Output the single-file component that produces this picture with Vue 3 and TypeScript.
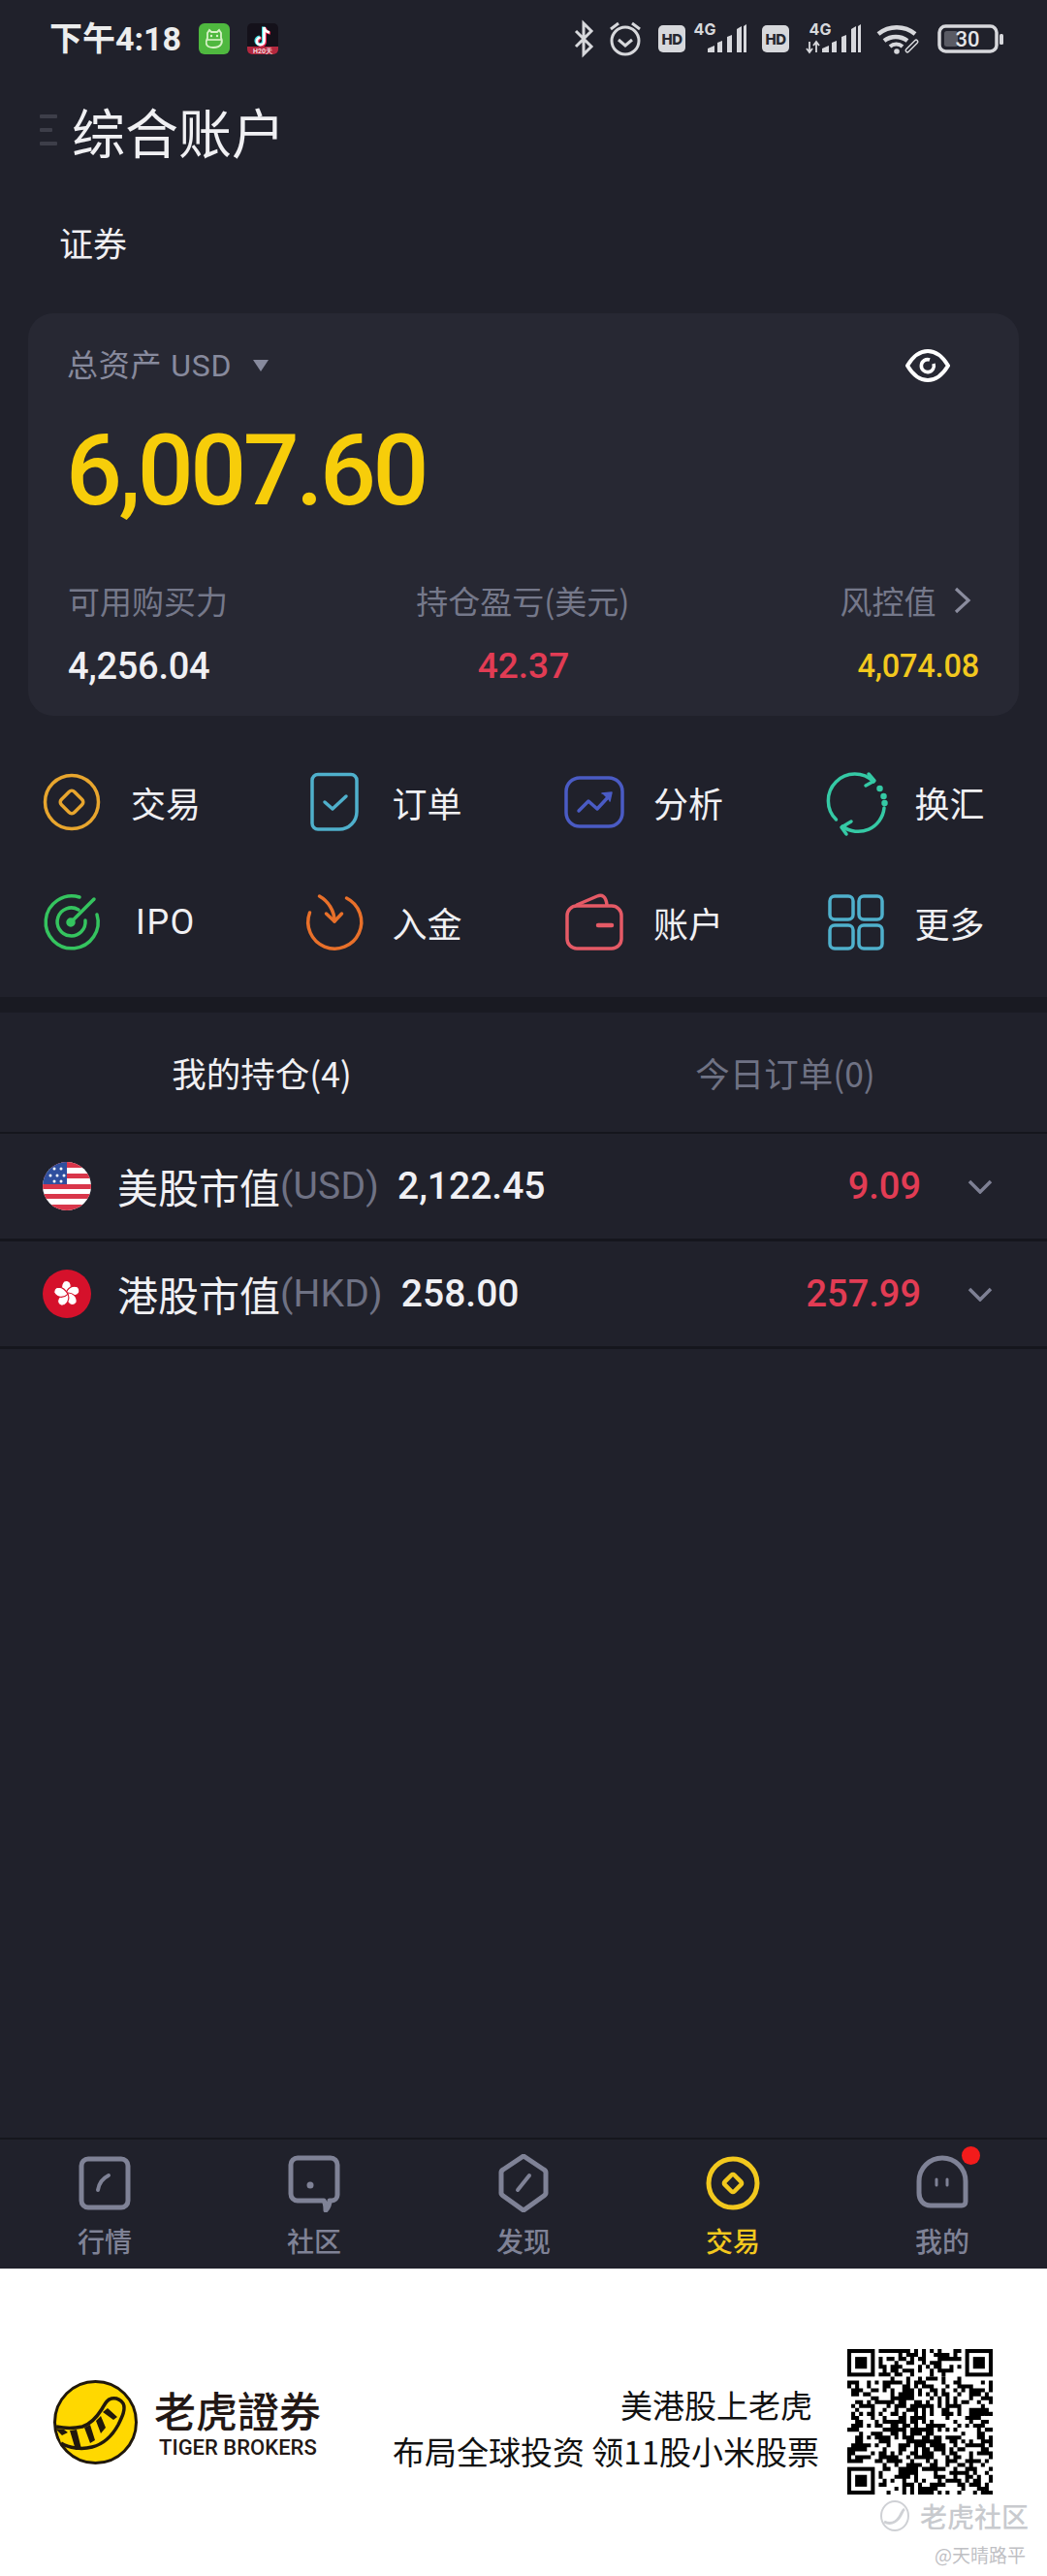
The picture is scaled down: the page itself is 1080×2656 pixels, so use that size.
<script setup lang="ts">
const QR_SIZE = 37
const cell = 150 / QR_SIZE

function inFinder(x: number, y: number): boolean {
  return (x < 8 && y < 8) || (x >= QR_SIZE - 8 && y < 8) || (x < 8 && y >= QR_SIZE - 8)
}

function buildQr(): string {
  let seed = 20210418
  const next = () => {
    seed = (seed * 1664525 + 1013904223) % 4294967296
    return seed / 4294967296
  }
  const parts: string[] = []
  for (let y = 0; y < QR_SIZE; y++) {
    for (let x = 0; x < QR_SIZE; x++) {
      const r = next()
      if (!inFinder(x, y) && r > 0.48) {
        parts.push(`M${(x * cell).toFixed(2)} ${(y * cell).toFixed(2)}h${cell.toFixed(2)}v${cell.toFixed(2)}h-${cell.toFixed(2)}z`)
      }
    }
  }
  return parts.join('')
}

const qrPath = buildQr()
const finders = [
  [0, 0],
  [150 - 7 * cell, 0],
  [0, 150 - 7 * cell],
]
const fs = 7 * cell

const summary = [
  { label: '可用购买力', value: '4,256.04', cls: 'v-white' },
  { label: '持仓盈亏(美元)', value: '42.37', cls: 'v-red' },
  { label: '风控值', value: '4,074.08', cls: 'v-yellow' },
]

const actions = [
  { id: 'trade', label: '交易' },
  { id: 'order', label: '订单' },
  { id: 'analysis', label: '分析' },
  { id: 'fx', label: '换汇' },
  { id: 'ipo', label: 'IPO' },
  { id: 'deposit', label: '入金' },
  { id: 'wallet', label: '账户' },
  { id: 'more', label: '更多' },
]

const tabs = [
  { id: 'quote', label: '行情' },
  { id: 'community', label: '社区' },
  { id: 'discover', label: '发现' },
  { id: 'trade', label: '交易' },
  { id: 'me', label: '我的' },
]

const holdings = [
  { id: 'us', name: '美股市值', cur: '(USD)', amount: '2,122.45', pnl: '9.09' },
  { id: 'hk', name: '港股市值', cur: '(HKD)', amount: '258.00', pnl: '257.99' },
]

const petalAngles = [0, 72, 144, 216, 288]
</script>

<template>
  <div class="page">
    <div class="dark">
      <!-- status bar -->
      <div class="status">
        <span class="time">下午4:18</span>
        <svg class="app-ic" width="32" height="32" viewBox="0 0 32 32">
          <rect width="32" height="32" rx="6" fill="#4fb83f" />
          <path d="M9 10l2-3 2 2h6l2-2 2 3v5c2 4 1 10-8 10S7 19 9 15z" fill="none" stroke="#d8f2c8" stroke-width="1.8" />
          <path d="M8 17h16" stroke="#d8f2c8" stroke-width="1.6" />
          <circle cx="13" cy="13" r="1.2" fill="#d8f2c8" />
          <circle cx="19" cy="13" r="1.2" fill="#d8f2c8" />
        </svg>
        <svg class="app-ic" width="32" height="32" viewBox="0 0 32 32">
          <rect width="32" height="32" rx="5" fill="#14111a" />
          <path d="M17.5 4v14.5a3.8 3.8 0 1 1-3.8-3.8" fill="none" stroke="#e8264f" stroke-width="3" transform="translate(1 .8)" />
          <path d="M17.5 4c.4 3 2.4 5 5.5 5.4" fill="none" stroke="#e8264f" stroke-width="3" transform="translate(1 .8)" />
          <path d="M17.5 4v14.5a3.8 3.8 0 1 1-3.8-3.8" fill="none" stroke="#3fe0e6" stroke-width="3" transform="translate(-1 -.6)" />
          <path d="M17.5 4v14.5a3.8 3.8 0 1 1-3.8-3.8" fill="none" stroke="#fff" stroke-width="2.6" />
          <path d="M17.5 4c.4 3 2.4 5 5.5 5.4" fill="none" stroke="#fff" stroke-width="2.6" />
          <path d="M0 24h32v3a5 5 0 0 1-5 5H5a5 5 0 0 1-5-5z" fill="#b3283f" />
          <text class="tk" x="16" y="31" text-anchor="middle">H20天</text>
        </svg>
        <span class="grow"></span>
        <svg class="sys" width="450" height="40" viewBox="590 20 450 40" fill="#d7d8dc">
          <!-- bluetooth -->
          <path d="M594 32l16 16-8 8V24l8 8-16 16" fill="none" stroke="#d7d8dc" stroke-width="3" />
          <!-- alarm -->
          <circle cx="645" cy="42" r="14" fill="none" stroke="#d7d8dc" stroke-width="3" />
          <path d="M638 41l7 6 7-6" fill="none" stroke="#d7d8dc" stroke-width="3" />
          <path d="M630 30l8-6M660 30l-8-6" stroke="#d7d8dc" stroke-width="3" />
          <!-- HD -->
          <rect x="679" y="26" width="28" height="28" rx="5" />
          <text class="hd" x="693" y="46" text-anchor="middle">HD</text>
          <text class="g4" x="727" y="36" text-anchor="middle">4G</text>
          <path d="M730 54v-4l7-3v7zM740 54V44l5-2v12zM750 54V38l5-2v18zM760 54V30l5-3v27zM767 54V27l3-2v29z" />
          <!-- HD 2 -->
          <rect x="786" y="26" width="28" height="28" rx="5" />
          <text class="hd" x="800" y="46" text-anchor="middle">HD</text>
          <text class="g4" x="846" y="36" text-anchor="middle">4G</text>
          <path d="M835 43v11M832 50l3 4 3-4M842 43v11M839 47l3-4 3 4" fill="none" stroke="#d7d8dc" stroke-width="1.8" />
          <path d="M848 54v-4l7-3v7zM858 54V44l5-2v12zM868 54V38l5-2v18zM878 54V30l5-3v27zM885 54V27l3-2v29z" />
          <!-- wifi -->
          <path d="M906 35a30 30 0 0 1 38 0" fill="none" stroke="#d7d8dc" stroke-width="4.5" />
          <path d="M912 42a20 20 0 0 1 24 0" fill="none" stroke="#d7d8dc" stroke-width="4.5" />
          <path d="M918 48a10 10 0 0 1 13 0" fill="none" stroke="#d7d8dc" stroke-width="4" />
          <circle cx="925" cy="53" r="2.8" />
          <path d="M936 52l9-9" stroke="#d7d8dc" stroke-width="5" stroke-linecap="round" />
          <path d="M936 52l9-9" stroke="#20212b" stroke-width="2" stroke-linecap="round" />
          <!-- battery -->
          <rect x="969" y="27" width="59" height="26" rx="6.5" fill="none" stroke="#d7d8dc" stroke-width="3.5" />
          <rect x="974" y="32" width="14" height="16" rx="2.5" fill="#5a5b64" />
          <rect x="1031" y="35" width="4" height="11" rx="1.5" />
          <text class="batt" x="998" y="48" text-anchor="middle">30</text>
        </svg>
      </div>

      <!-- title -->
      <div class="title-row">
        <div class="handle"><i></i><i class="short"></i><i></i></div>
        <h1 class="title">综合账户</h1>
      </div>
      <div class="section">证券</div>

      <!-- assets card -->
      <div class="card">
        <div class="card-top">
          <span class="total">总资产 USD</span>
          <span class="tri"></span>
          <span class="grow"></span>
          <svg class="eye" width="46" height="36" viewBox="0 0 46 36" fill="none" stroke="#fff">
            <path d="M2 18C8 8 15 3 23 3s15 5 21 15c-6 10-13 15-21 15S8 28 2 18z" stroke-width="4" />
            <path d="M29 16a6.5 6.5 0 1 1-4-4" stroke-width="3.6" />
          </svg>
        </div>
        <div class="big">6,007.60</div>
        <div class="sum-row">
          <div v-for="(s, i) in summary" :key="s.label" class="sum" :class="'sum-' + i">
            <div class="sum-label">
              {{ s.label }}
              <svg v-if="i === 2" class="chev" width="18" height="28" viewBox="0 0 18 28" fill="none" stroke="#8a8c9e" stroke-width="3.2"><path d="M2 2l13 12L2 26" /></svg>
            </div>
            <div class="sum-value" :class="s.cls">{{ s.value }}</div>
          </div>
        </div>
      </div>

      <!-- action grid -->
      <div class="actions">
        <div v-for="a in actions" :key="a.id" class="action">
          <svg class="a-ic" width="64" height="64" viewBox="0 0 64 64" fill="none" stroke-width="3.5" stroke-linecap="round" stroke-linejoin="round">
            <g v-if="a.id === 'trade'" stroke="#e8a62e">
              <circle cx="32" cy="32" r="27.5" />
              <rect x="22.5" y="22.5" width="19" height="19" rx="4" transform="rotate(45 32 32)" />
            </g>
            <g v-else-if="a.id === 'order'" stroke="#4fb0cc">
              <path d="M16 3.5h34a6 6 0 0 1 6 6V42a18 18 0 0 1-18 18H16a6 6 0 0 1-6-6V9.5a6 6 0 0 1 6-6z" />
              <path d="M23 32l8 7 14-13" />
            </g>
            <g v-else-if="a.id === 'analysis'" stroke="#4a5bc4">
              <rect x="3" y="7" width="58" height="50" rx="14" />
              <path d="M16 41l10-10 9 8 13-14" />
              <path d="M40 23l10-1-2 9" fill="#4a5bc4" stroke-width="1.5" />
            </g>
            <g v-else-if="a.id === 'fx'" stroke="#35c9a5">
              <path d="M11.5 50A27 27 0 0 1 50 11" />
              <path d="M45 3l6 7-9 5" />
              <path d="M61 38A27 27 0 0 1 18 57" />
              <path d="M27 52l-10 6 5 7" />
              <circle cx="56.5" cy="18" r="1.5" fill="#35c9a5" />
              <circle cx="60.5" cy="26" r="1.5" fill="#35c9a5" />
              <circle cx="61.5" cy="33" r="1.5" fill="#35c9a5" />
            </g>
            <g v-else-if="a.id === 'ipo'" stroke="#35c45f">
              <path d="M40 6A27 27 0 1 0 58 24" />
              <path d="M39 19A14.5 14.5 0 1 0 46 30" />
              <path d="M31 32L55 8" />
              <circle cx="31" cy="32" r="3" fill="#35c45f" />
            </g>
            <g v-else-if="a.id === 'deposit'" stroke="#e8702a">
              <path d="M45.5 7A27.5 27.5 0 1 1 7.5 22" />
              <path d="M17.5 5c9 5 15.5 15 15.5 26" />
              <path d="M24.5 23l8.5 8 7.5-8" />
            </g>
            <g v-else-if="a.id === 'wallet'" stroke="#e55a66">
              <rect x="4" y="15" width="56" height="44" rx="10" />
              <path d="M14 14l21-9c5-2 9 0 10 9" />
              <path d="M36 35h14" stroke-width="4.5" />
            </g>
            <g v-else stroke="#4fb0cc">
              <rect x="5" y="5" width="24" height="24" rx="5" />
              <rect x="35" y="5" width="24" height="24" rx="5" />
              <rect x="5" y="35" width="24" height="24" rx="5" />
              <rect x="35" y="35" width="24" height="24" rx="5" />
            </g>
          </svg>
          <span class="a-text" :class="{ latin: a.id === 'ipo' }">{{ a.label }}</span>
        </div>
      </div>

      <div class="band"></div>

      <!-- position tabs -->
      <div class="pos-tabs">
        <span class="pos on">我的持仓(4)</span>
        <span class="pos">今日订单(0)</span>
      </div>

      <div v-for="h in holdings" :key="h.id" class="row">
        <svg class="flag" width="50" height="50" viewBox="0 0 50 50">
          <defs>
            <clipPath id="clip-us"><circle cx="25" cy="25" r="25" /></clipPath>
          </defs>
          <g v-if="h.id === 'us'" clip-path="url(#clip-us)">
            <rect width="50" height="50" fill="#fff" />
            <rect y="0" width="50" height="6" fill="#d9364a" />
            <rect y="12" width="50" height="5" fill="#d9364a" />
            <rect y="23" width="50" height="5" fill="#d9364a" />
            <rect y="33" width="50" height="5" fill="#d9364a" />
            <rect y="44" width="50" height="6" fill="#d9364a" />
            <rect width="25" height="23" fill="#2f4f9e" />
            <circle cx="12" cy="7" r="1.5" fill="#fff" />
            <circle cx="19" cy="7" r="1.5" fill="#fff" />
            <circle cx="8" cy="14" r="1.5" fill="#fff" />
            <circle cx="15" cy="14" r="1.5" fill="#fff" />
            <circle cx="22" cy="14" r="1.5" fill="#fff" />
            <circle cx="12" cy="20" r="1.5" fill="#fff" />
            <circle cx="19" cy="20" r="1.5" fill="#fff" />
          </g>
          <g v-else>
            <circle cx="25" cy="25" r="25" fill="#d5112b" />
            <path
              v-for="deg in petalAngles"
              :key="deg"
              d="M25 26c-6-3-7-10-3-14 3-1 6 0 7 3 1 4-1 8-4 11z"
              fill="#fff"
              stroke="#d5112b"
              stroke-width="1.1"
              :transform="`rotate(${deg} 25 25)`"
            />
          </g>
        </svg>
        <span class="r-name">{{ h.name }}</span>
        <span class="r-cur">{{ h.cur }}</span>
        <span class="r-amount">{{ h.amount }}</span>
        <span class="grow"></span>
        <span class="r-pnl">{{ h.pnl }}</span>
        <svg class="r-chev" width="26" height="15" viewBox="0 0 26 15" fill="none" stroke="#7e8094" stroke-width="3.5"><path d="M2 2l11 11L24 2" /></svg>
      </div>

      <div class="grow"></div>

      <!-- bottom tabs -->
      <div class="tabbar">
        <div v-for="t in tabs" :key="t.id" class="tab" :class="{ active: t.id === 'trade' }">
          <svg class="t-ic" width="64" height="60" viewBox="0 0 64 60" fill="none" stroke="#7f8296" stroke-width="5" stroke-linecap="round" stroke-linejoin="round">
            <g v-if="t.id === 'quote'">
              <rect x="8" y="5" width="48" height="50" rx="7" />
              <path d="M25 37c1-7 5-12 11-15" stroke-width="4" />
            </g>
            <g v-else-if="t.id === 'community'">
              <path d="M15 4h34a7 7 0 0 1 7 7v31a6 6 0 0 1-6 6h-2c0 4-1 7-4 10 0-4 0-7-2-10H15a7 7 0 0 1-7-7V11a7 7 0 0 1 7-7z" />
              <circle cx="28" cy="32" r="3.5" fill="#7f8296" stroke="none" />
            </g>
            <g v-else-if="t.id === 'discover'">
              <path d="M32 2l21 14a4 4 0 0 1 2 4v19a4 4 0 0 1-2 4L32 58 11 43a4 4 0 0 1-2-4V20a4 4 0 0 1 2-4z" />
              <path d="M26 37l12-15" stroke-width="4" />
            </g>
            <g v-else-if="t.id === 'trade'" stroke="#f2c81e">
              <circle cx="32" cy="30" r="25" />
              <rect x="25" y="23" width="14" height="14" rx="2" transform="rotate(45 32 30)" stroke-width="4.5" />
            </g>
            <g v-else>
              <path d="M8 40V28a24 24 0 0 1 48 0v21c0 3-2 4-4 4H20C12 53 8 47 8 40z" />
              <path d="M26 26v6M37 26v6" stroke-width="3" />
            </g>
          </svg>
          <i v-if="t.id === 'me'" class="dot"></i>
          <span class="t-label">{{ t.label }}</span>
        </div>
      </div>
    </div>

    <!-- promo footer -->
    <div class="footer">
      <svg class="logo" width="87" height="87" viewBox="0 0 87 87">
        <circle cx="43.5" cy="43.5" r="42" fill="#ffd800" stroke="#20180c" stroke-width="3" />
        <path d="M3 48c10 2 18 2 27 0 9-3 15-10 20-18 3-5 5-10 10-11 5-1 9 1 12 5 3 6-1 14-5 22-6 11-15 20-27 23-11 3-24 1-32-4" fill="#ffd800" stroke="#20180c" stroke-width="3.5" stroke-linejoin="round" />
        <path d="M2 50l9 1 4 3-6 3zM17 52l7-1 5 20-6 1zM32 49l6-3 5 16-5 3zM44 42l5-5 5 12-5 6zM51 33l5-4 10 9-4 3z" fill="#20180c" />
      </svg>
      <div class="brand">
        <div class="brand-cn">老虎證券</div>
        <div class="brand-en">TIGER BROKERS</div>
      </div>
      <span class="grow"></span>
      <div class="promo">
        <div class="promo-1">美港股上老虎</div>
        <div class="promo-2">布局全球投资 领11股小米股票</div>
      </div>
      <div class="qr-col">
        <svg class="qr" width="150" height="150" viewBox="0 0 150 150">
          <path :d="qrPath" fill="#000" />
          <g v-for="(f, i) in finders" :key="i">
            <rect :x="f[0]" :y="f[1]" :width="fs" :height="fs" fill="#000" />
            <rect :x="f[0] + cell" :y="f[1] + cell" :width="fs - 2 * cell" :height="fs - 2 * cell" fill="#fff" />
            <rect :x="f[0] + 2 * cell" :y="f[1] + 2 * cell" :width="fs - 4 * cell" :height="fs - 4 * cell" fill="#000" />
          </g>
        </svg>
        <div class="wm">
          <svg width="32" height="32" viewBox="0 0 32 32" fill="none" stroke="#cfd1d5" stroke-width="2">
            <ellipse cx="16" cy="16" rx="14" ry="15" />
            <path d="M5 22c6 3 12 1 16-5 2-3 3-7 5-8" stroke-width="3" />
          </svg>
          <span class="wm-text">老虎社区</span>
        </div>
        <div class="wm-user">@天晴路平</div>
      </div>
    </div>
  </div>
</template>

<style scoped>
.page {
  width: 1080px;
  height: 2656px;
  display: flex;
  flex-direction: column;
  font-family: "Noto Sans CJK SC", "Noto Sans", sans-serif;
  overflow: hidden;
}
.dark {
  height: 2339px;
  background: #20212b;
  display: flex;
  flex-direction: column;
}
.grow { flex: 1 1 auto; }

.status {
  height: 80px;
  padding: 0 40px 0 51px;
  display: flex;
  align-items: center;
}
.time {
  font-family: "Roboto", "Noto Sans CJK SC", sans-serif;
  font-size: 34px;
  font-weight: 700;
  color: #eceded;
  line-height: 40px;
}
.app-ic { flex: none; margin-left: 18px; }
.tk { font: 700 7px "Roboto", sans-serif; fill: #f5d5da; }
.sys { flex: none; }
.hd { font: 800 15px "Inter", sans-serif; fill: #26272f; letter-spacing: -0.5px; }
.g4 { font: 700 16px "Inter", sans-serif; fill: #d7d8dc; }
.batt { font: 500 22px "Roboto", sans-serif; fill: #e4e5e8; }

.title-row {
  height: 94px;
  margin-top: 7px;
  display: flex;
  align-items: center;
  padding-left: 41px;
}
.handle { width: 18px; height: 32px; display: flex; flex-direction: column; justify-content: space-between; }
.handle i { display: block; width: 18px; height: 4px; background: #3d3e49; border-radius: 1px; }
.handle i.short { width: 13px; }
.title {
  margin: 0 0 0 15px;
  font-size: 55px;
  font-weight: 400;
  line-height: 64px;
  color: #f0f0f3;
}
.section {
  margin-top: 44px;
  padding-left: 61px;
  height: 50px;
  line-height: 50px;
  font-size: 35px;
  color: #f0f0f3;
}

.card {
  margin: 48px 29px 0 29px;
  height: 415px;
  box-sizing: border-box;
  padding: 32px 41px 0 41px;
  background: #272833;
  border-radius: 26px;
  display: flex;
  flex-direction: column;
}
.card-top { display: flex; align-items: center; height: 44px; }
.total { font-size: 32px; color: #878a9d; line-height: 44px; letter-spacing: .8px; margin-left: -1px; font-family: "Roboto", "Noto Sans CJK SC", sans-serif; }
.tri {
  margin-left: 22px;
  width: 0; height: 0;
  border-left: 8px solid transparent;
  border-right: 8px solid transparent;
  border-top: 12px solid #878a9d;
}
.eye { margin-right: 30px; flex: none; }
.big {
  margin-top: 31px;
  margin-left: -2px;
  height: 110px;
  line-height: 110px;
  font-family: "Roboto", sans-serif;
  font-weight: 500;
  font-size: 102px;
  letter-spacing: -3.5px;
  color: #f7cd0a;
}
.sum-row {
  margin-top: 57px;
  display: grid;
  grid-template-columns: 1fr 1fr 1fr;
}
.sum { display: flex; flex-direction: column; }
.sum-1 { align-items: center; }
.sum-1 .sum-label { padding-left: 6px; }
.sum-2 { align-items: flex-end; }
.sum-label {
  height: 44px;
  line-height: 44px;
  font-size: 33px;
  color: #75788a;
  display: flex;
  align-items: center;
  white-space: pre;
}
.chev { margin-left: 11px; margin-right: 8px; }
.sum-value {
  margin-top: 24px;
  height: 44px;
  line-height: 44px;
  font-family: "Roboto", sans-serif;
  font-weight: 500;
}
.v-white { color: #f0f0f3; font-size: 38px; letter-spacing: -0.3px; }
.v-red { color: #e23c54; font-size: 37px; }
.v-yellow { color: #f2c81e; font-size: 32.5px; letter-spacing: -0.2px; }

.actions {
  margin-top: 57px;
  display: grid;
  grid-template-columns: repeat(4, 269.5px);
  grid-auto-rows: 124px;
  padding-left: 42px;
}
.action { display: flex; align-items: center; height: 64px; }
.a-ic { flex: none; overflow: visible; }
.a-text {
  margin-left: 29px;
  width: 72px;
  text-align: center;
  font-size: 36px;
  color: #f0f0f3;
  line-height: 44px;
}
.a-text.latin { font-family: "Roboto", sans-serif; letter-spacing: 1.5px; }

.band {
  margin-top: -15px;
  height: 16px;
  background: #191a22;
}

.pos-tabs {
  height: 123px;
  display: grid;
  grid-template-columns: 1fr 1fr;
  align-items: center;
  border-bottom: 2px solid #15161d;
}
.pos {
  text-align: center;
  font-size: 35.5px;
  line-height: 44px;
  color: #6f7284;
}
.pos.on { color: #f0f0f3; }

.row {
  height: 108px;
  display: flex;
  align-items: center;
  padding: 0 56px 0 44px;
  border-bottom: 3px solid #15161d;
}
.flag { flex: none; margin-right: 27px; }
.r-name { font-size: 42px; color: #f0f0f3; line-height: 50px; }
.r-cur { font-family: "Roboto", sans-serif; font-size: 39px; color: #6f7284; letter-spacing: .2px; }
.r-amount {
  margin-left: 19px;
  font-family: "Roboto", sans-serif;
  font-weight: 500;
  font-size: 39px;
  color: #f0f0f3;
}
.r-pnl { font-family: "Roboto", sans-serif; font-weight: 500; font-size: 38px; color: #e23c54; }
.r-chev { flex: none; margin-left: 48px; }

.tabbar {
  height: 135px;
  box-sizing: border-box;
  border-top: 2px solid #15161d;
  display: grid;
  grid-template-columns: repeat(5, 216px);
}
.tab { display: flex; flex-direction: column; align-items: center; padding-top: 15px; position: relative; }
.t-ic { flex: none; }
.t-label { margin-top: 11px; font-size: 28px; line-height: 36px; color: #7f8296; font-weight: 500; }
.tab.active .t-label { color: #f2c81e; }
.dot {
  position: absolute;
  left: 128px; top: 7px;
  width: 19px; height: 19px;
  border-radius: 50%;
  background: #f31b1b;
}

.footer {
  flex: 1;
  background: #fff;
  display: flex;
  padding: 83px 0 0 55px;
}
.logo { flex: none; margin-top: 32px; }
.brand { margin-left: 17px; margin-top: 37px; }
.brand-cn { font-size: 43px; line-height: 50px; color: #231815; font-weight: 500; }
.brand-en {
  margin-top: 3px;
  margin-left: 5px;
  font-family: "Roboto", sans-serif;
  font-size: 22px;
  font-weight: 500;
  line-height: 24px;
  color: #231815;
}
.promo { margin-top: 33px; margin-right: 29px; text-align: right; color: #111; }
.promo-1 { font-size: 33px; line-height: 48px; margin-right: 7px; }
.promo-2 { font-size: 33px; line-height: 48px; white-space: nowrap; }
.qr-col { width: 206px; flex: none; }
.qr { display: block; }
.wm {
  margin-left: 33px;
  margin-top: 5px;
  display: flex;
  align-items: center;
  height: 34px;
  gap: 10px;
}
.wm-text { font-size: 28px; line-height: 34px; color: #c8cace; white-space: nowrap; font-weight: 500; }
.wm-user { margin-top: 11px; margin-left: 90px; font-size: 19px; line-height: 24px; color: #bfc0c4; white-space: nowrap; }
</style>

<style>
html, body { margin: 0; padding: 0; background: #20212b; }
</style>
